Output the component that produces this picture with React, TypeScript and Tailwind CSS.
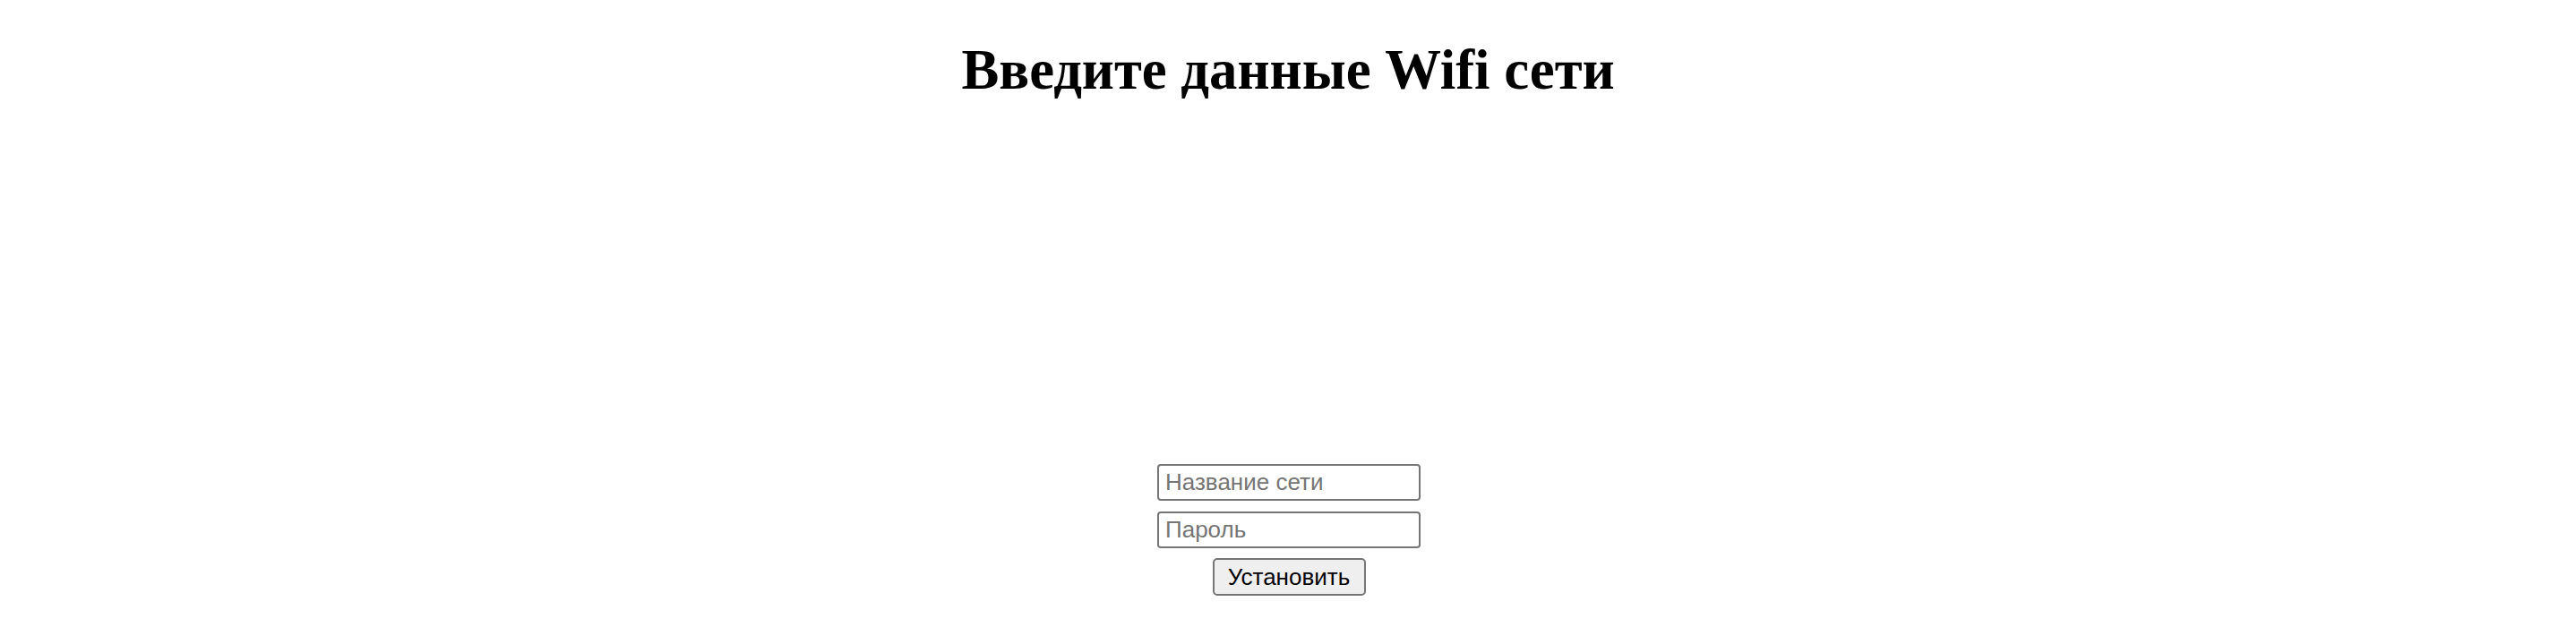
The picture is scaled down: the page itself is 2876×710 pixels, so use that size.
export default function App() {
  return (
    <div className="flex min-h-screen flex-col bg-white pt-[41px] text-black">
      <h1 className="m-0 origin-center scale-x-[0.98] text-center text-[64px] leading-[74px] font-bold font-['Liberation_Serif',serif]">
        Введите данные Wifi сети
      </h1>
      <form
        className="mt-[403px] flex flex-col items-center font-['Liberation_Sans',Arial,sans-serif]"
        onSubmit={(e) => e.preventDefault()}
      >
        <input
          type="text"
          placeholder="Название сети"
          className="ml-[2px] box-border h-[41px] w-[294px] rounded-[4px] border-2 border-[#767676] bg-white px-[7px] text-[26px] text-black placeholder:text-[#757575] outline-none"
        />
        <input
          type="password"
          placeholder="Пароль"
          className="ml-[2px] mt-[12px] box-border h-[41px] w-[294px] rounded-[4px] border-2 border-[#767676] bg-white px-[7px] text-[26px] text-black placeholder:text-[#757575] outline-none"
        />
        <button
          type="submit"
          className="ml-[2px] mt-[11px] box-border h-[42px] w-[171px] rounded-[5px] border-2 border-[#767676] bg-[#efefef] text-[26px] leading-none text-black"
        >
          Установить
        </button>
      </form>
    </div>
  );
}
